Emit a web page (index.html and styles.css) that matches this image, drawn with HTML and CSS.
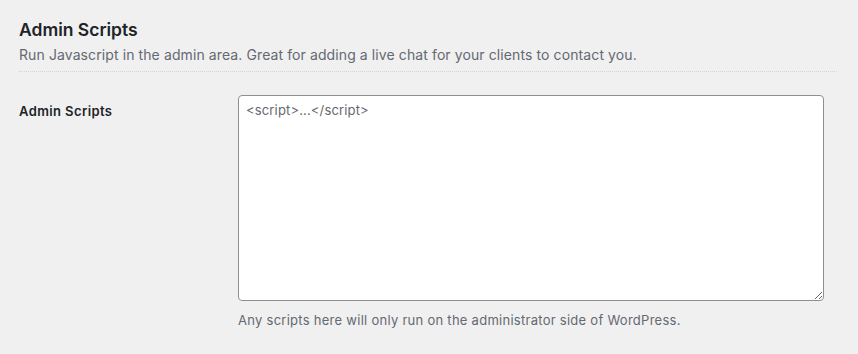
FILE: index.html
```html
<!DOCTYPE html>
<html lang="en">
<head>
  <meta charset="UTF-8" />
  <title>Admin Scripts</title>
  <link rel="stylesheet" href="styles.css">
</head>
<body>
  <div class="wrap">
    <h2>Admin Scripts</h2>
    <p class="intro">Run Javascript in the admin area. Great for adding a live chat for your clients to contact you.</p>
    <hr class="sep" />
    <div class="row">
      <label class="row-label" for="admin_scripts">Admin Scripts</label>
      <div class="row-field">
        <textarea id="admin_scripts" placeholder="<script>...</script>"></textarea>
        <p class="hint">Any scripts here will only run on the administrator side of WordPress.</p>
      </div>
    </div>
  </div>
</body>
</html>
```

FILE: styles.css
```css
* {
  box-sizing: border-box;
}

body {
  margin: 0;
  background: #f0f0f1;
  color: #1d2327;
  font-family: Inter, "Noto Sans", sans-serif;
  font-size: 13px;
  line-height: 1.4;
}

.wrap {
  padding: 18px 21px 0 19px;
}

.wrap h2 {
  margin: 0;
  font-size: 17.5px;
  font-weight: 600;
  line-height: 24px;
}

.intro {
  margin: 4px 0 0;
  color: #646970;
  font-size: 14px;
  letter-spacing: 0.1px;
  line-height: 18px;
}

.sep {
  margin: 7px 0 0;
  border: 0;
  border-top: 1px dotted #d6d6d8;
}

.row {
  display: flex;
  margin-top: 23px;
}

.row-label {
  width: 219px;
  flex-shrink: 0;
  padding-top: 7px;
  font-weight: 600;
  letter-spacing: 0.4px;
}

.row-field {
  flex: 1;
}

.row-field textarea {
  display: block;
  width: 586px;
  height: 206px;
  padding: 5px 7px;
  border: 1px solid #8c8f94;
  border-radius: 4px;
  background: #fff;
  font-family: inherit;
  font-size: 13px;
  letter-spacing: 0.15px;
  line-height: 1.4;
  color: #2c3338;
}

.row-field textarea::placeholder {
  color: #646970;
}

.hint {
  margin: 10px 0 0;
  color: #646970;
  letter-spacing: 0.27px;
}
```
